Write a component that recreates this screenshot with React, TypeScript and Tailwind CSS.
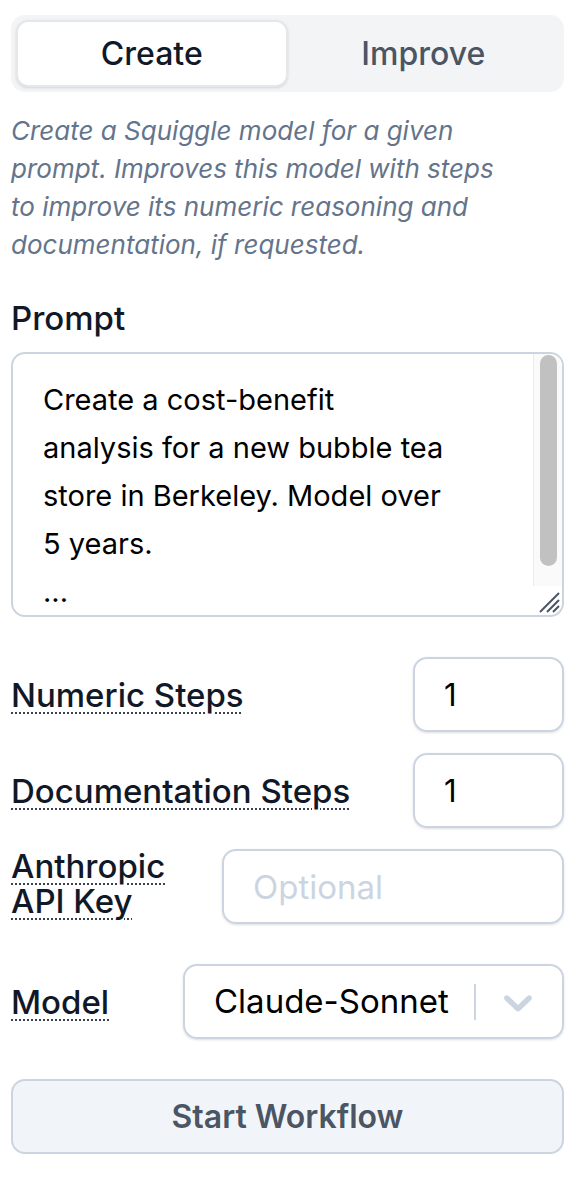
import { useState } from 'react'

const promptText =
  'Create a cost-benefit\nanalysis for a new bubble tea\nstore in Berkeley. Model over\n5 years.\n...'

function ChevronDown() {
  return (
    <svg width="48" height="48" viewBox="0 0 20 20" className="fill-[#cbd5e1]">
      <path d="M4.516 7.548c0.436-0.446 1.043-0.481 1.576 0l3.908 3.747 3.908-3.747c0.533-0.481 1.141-0.446 1.574 0 0.436 0.445 0.408 1.197 0 1.615-0.406 0.418-4.695 4.502-4.695 4.502-0.217 0.223-0.502 0.335-0.787 0.335s-0.57-0.112-0.789-0.335c0 0-4.287-4.084-4.695-4.502s-0.436-1.17 0-1.615z" />
    </svg>
  )
}

function FieldLabel({ children }: { children: React.ReactNode }) {
  return (
    <span className="text-[33px] leading-[34px] font-medium text-[#111827] underline decoration-dotted decoration-[#374151] decoration-[2px] underline-offset-[6px]">
      {children}
    </span>
  )
}

export default function App() {
  const [tab, setTab] = useState<'create' | 'improve'>('create')

  return (
    <div className="w-[581px] min-h-[1182px] bg-white font-['Inter','Noto_Sans',sans-serif] pl-[11px] pr-[17px] pt-[15px]">
      {/* mode tabs */}
      <div className="grid grid-cols-2 h-[77px] p-[5px] rounded-[14px] bg-[#f3f4f6]">
        <button
          onClick={() => setTab('create')}
          className={`rounded-[12px] text-[32px] font-medium ${
            tab === 'create'
              ? 'bg-white text-[#111827] border-2 border-[#e5e7eb] shadow-sm'
              : 'text-[#4b5563]'
          }`}
        >
          Create
        </button>
        <button
          onClick={() => setTab('improve')}
          className={`rounded-[12px] text-[32px] font-medium ${
            tab === 'improve'
              ? 'bg-white text-[#111827] border-2 border-[#e5e7eb] shadow-sm'
              : 'text-[#4b5563]'
          }`}
        >
          Improve
        </button>
      </div>

      <p className="mt-[20px] w-[500px] text-[26px] leading-[38px] italic text-[#64748b]">
        Create a Squiggle model for a given prompt. Improves this model with steps to improve its numeric
        reasoning and documentation, if requested.
      </p>

      {/* prompt */}
      <div className="mt-[34px] text-[33px] leading-[40px] font-medium text-[#111827]">Prompt</div>
      <div className="relative mt-[14px]">
        <textarea
          defaultValue={promptText}
          className="block w-full h-[265px] border-2 border-[#cbd5e1] rounded-[14px] pl-[30px] pr-[40px] pt-[22px] pb-[22px] text-[29px] leading-[48px] text-black outline-none resize-none overflow-hidden"
        />
        {/* scrollbar */}
        <div className="absolute top-[2px] right-[2px] w-[29px] h-[232px] rounded-tr-[12px] bg-[#fafafa] border-l border-[#ececec]">
          <div className="mt-[1px] ml-[6px] w-[17px] h-[211px] rounded-full bg-[#c1c1c1]" />
        </div>
        {/* resize grip */}
        <svg className="absolute right-[4px] bottom-[4px]" width="22" height="22" viewBox="0 0 22 22">
          <path d="M2 21 L21 2 M9 21 L21 9 M15 21 L21 15" stroke="#4b5563" strokeWidth="2" />
        </svg>
      </div>

      {/* step settings */}
      <div className="mt-[40px] flex items-center justify-between">
        <FieldLabel>Numeric Steps</FieldLabel>
        <input
          type="number"
          defaultValue={1}
          className="w-[151px] h-[75px] border-2 border-[#cbd5e1] rounded-[14px] pl-[29px] text-[31px] text-black shadow-sm outline-none"
        />
      </div>

      <div className="mt-[21px] flex items-center justify-between">
        <FieldLabel>Documentation Steps</FieldLabel>
        <input
          type="number"
          defaultValue={1}
          className="w-[151px] h-[75px] border-2 border-[#cbd5e1] rounded-[14px] pl-[29px] text-[31px] text-black shadow-sm outline-none"
        />
      </div>

      <div className="mt-[21px] flex items-center justify-between">
        <div className="w-[175px] -mt-[6px]">
          <FieldLabel>Anthropic API Key</FieldLabel>
        </div>
        <input
          type="password"
          placeholder="Optional"
          className="w-[342px] h-[75px] border-2 border-[#cbd5e1] rounded-[14px] pl-[29px] text-[33px] text-black placeholder:text-[#cbd5e1] shadow-sm outline-none"
        />
      </div>

      <div className="mt-[40px] flex items-center justify-between">
        <FieldLabel>Model</FieldLabel>
        <div className="w-[381px] h-[75px] border-2 border-[#cbd5e1] rounded-[14px] shadow-sm flex items-center">
          <span className="flex-1 pl-[29px] text-[33px] text-black">Claude-Sonnet</span>
          <span className="w-[2px] h-[36px] bg-[#cbd5e1]" />
          <span className="pl-[18px] pr-[20px] flex items-center">
            <ChevronDown />
          </span>
        </div>
      </div>

      <button className="mt-[40px] w-full h-[75px] rounded-[14px] border-2 border-[#cbd5e1] bg-[#f1f5f9] text-[32px] font-semibold text-[#4b5563]">
        Start Workflow
      </button>
    </div>
  )
}
